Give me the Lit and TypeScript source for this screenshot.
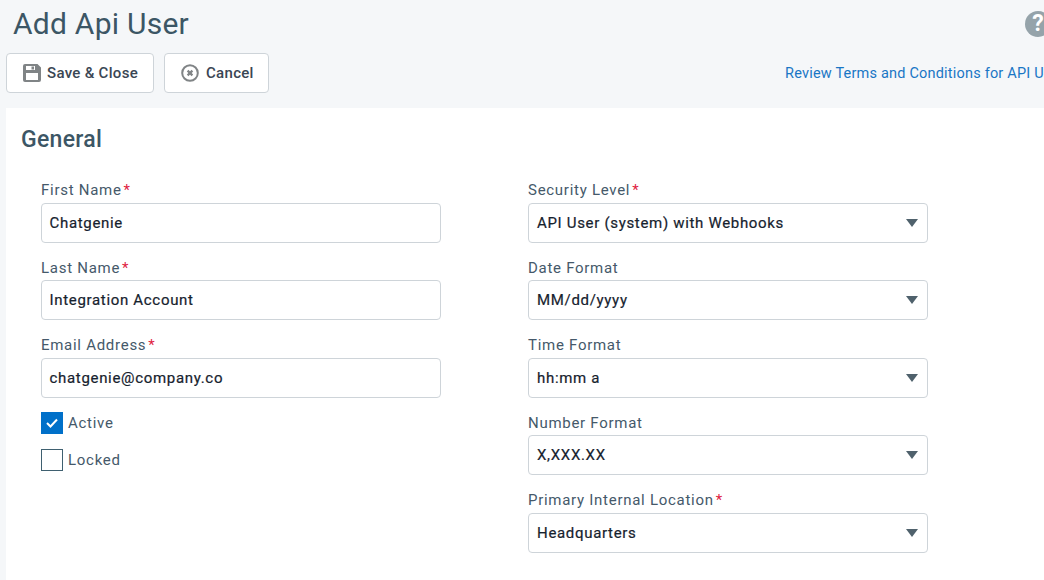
import { LitElement, html, css, svg } from "lit";
import { customElement } from "lit/decorators.js";

type Field = { label: string; value: string; req?: boolean };

const left: Field[] = [
  { label: "First Name", value: "Chatgenie", req: true },
  { label: "Last Name", value: "Integration Account", req: true },
  { label: "Email Address", value: "chatgenie@company.co", req: true },
];
const right: Field[] = [
  { label: "Security Level", value: "API User (system) with Webhooks", req: true },
  { label: "Date Format", value: "MM/dd/yyyy" },
  { label: "Time Format", value: "hh:mm a" },
  { label: "Number Format", value: "X,XXX.XX" },
  { label: "Primary Internal Location", value: "Headquarters", req: true },
];

@customElement("app-root")
export class AppRoot extends LitElement {
  static styles = css`
    :host {
      display: block;
      width: 1044px;
      height: 580px;
      overflow: hidden;
      background: #f5f7f9;
      font-family: Roboto, "Liberation Sans", sans-serif;
      color: #3b5260;
    }
    .head {
      display: flex;
      justify-content: space-between;
      height: 53px;
      padding-left: 13px;
      overflow: hidden;
    }
    h1 {
      margin: 6px 0 0;
      font-size: 30px;
      line-height: 36px;
      font-weight: 400;
      color: #3c5665;
      letter-spacing: 0.25px;
    }
    .help {
      width: 26px;
      height: 26px;
      margin: 11px -7px 0 0;
      flex: none;
      border-radius: 50%;
      background: #95a3aa;
      color: #fff;
      font-size: 23px;
      font-weight: 700;
      line-height: 26px;
      text-align: center;
    }
    .bar {
      display: flex;
      align-items: center;
      height: 40px;
      padding-left: 6px;
      gap: 10px;
      white-space: nowrap;
    }
    .btn {
      display: flex;
      align-items: center;
      box-sizing: border-box;
      height: 40px;
      background: #fff;
      border: 1px solid #ced4d9;
      border-radius: 4px;
      font-size: 15px;
      font-weight: 500;
      color: #3a4654;
      letter-spacing: 0.3px;
    }
    .save { width: 148px; padding-left: 16px; gap: 6px; }
    .cancel { width: 105px; padding-left: 16px; gap: 7px; }
    .link {
      margin-left: auto;
      width: 259px;
      overflow: hidden;
      color: #1976c5;
      font-size: 14.5px;
      letter-spacing: 0.2px;
    }
    .panel {
      margin: 15px 0 0 6px;
      height: 472px;
      background: #fff;
      padding: 18px 0 0 15px;
      box-sizing: border-box;
    }
    h2 {
      margin: 0;
      font-size: 23px;
      line-height: 27px;
      font-weight: 500;
      letter-spacing: 0.3px;
      color: #3c5665;
    }
    .cols {
      display: flex;
      gap: 87px;
      margin: 0 0 0 20px;
      padding-top: 28.5px;
    }
    .col { width: 400px; display: flex; flex-direction: column; }
    .field { height: 77.5px; }
    .label {
      height: 21px;
      margin-top: -0.5px;
      margin-bottom: 0.5px;
      font-size: 15px;
      line-height: 18px;
      letter-spacing: 0.72px;
      font-weight: 400;
      color: #45596a;
      white-space: nowrap;
    }
    .req { color: #e0223f; margin-left: 2px; }
    .box {
      display: flex;
      align-items: center;
      justify-content: space-between;
      box-sizing: border-box;
      height: 40px;
      border: 1px solid #ced4d9;
      border-radius: 4px;
      padding: 0 9px 0 8px;
      font-size: 15px;
      font-weight: 400;
      letter-spacing: 0.68px;
      color: #16222e;
      -webkit-text-stroke: 0.2px #16222e;
    }
    .text-box { padding-left: 7.5px; }
    .arrow {
      width: 0;
      height: 0;
      border-left: 6px solid transparent;
      border-right: 6px solid transparent;
      border-top: 8px solid #4f616c;
    }
    .checks { display: flex; flex-direction: column; gap: 15px; margin-top: -2px; }
    .check { display: flex; align-items: center; gap: 5px; height: 22px; font-size: 15px; letter-spacing: 0.72px; color: #45596a; }
    .tick {
      box-sizing: border-box;
      width: 22px;
      height: 22px;
      display: flex;
      align-items: center;
      justify-content: center;
      border: 1px solid #3f6070;
      background: #fff;
    }
    .tick.on { background: #0070c9; border-color: #0070c9; }
  `;

  private field(f: Field, select: boolean) {
    return html`<div class="field">
      <div class="label">${f.label}${f.req ? html`<span class="req">*</span>` : ""}</div>
      <div class="box ${select ? "" : "text-box"}"><span>${f.value}</span>${select ? html`<span class="arrow"></span>` : ""}</div>
    </div>`;
  }

  render() {
    const disk = svg`<path fill="#808486" fill-rule="evenodd" d="M2 0h12.5L18 3.5V16a2 2 0 0 1-2 2H2a2 2 0 0 1-2-2V2a2 2 0 0 1 2-2zM3 2v4h9V2zM3 9v7h12V9z"/><rect x="8.5" y="2.5" width="2.5" height="3" fill="#808486"/>`;
    return html`
      <div class="head">
        <h1>Add Api User</h1>
        <div class="help">?</div>
      </div>
      <div class="bar">
        <div class="btn save">
          <svg width="18" height="18" viewBox="0 0 18 18">${disk}</svg>
          <span>Save &amp; Close</span>
        </div>
        <div class="btn cancel">
          <svg width="18" height="18" viewBox="0 0 18 18" fill="none" stroke="#808486">
            <circle cx="9" cy="9" r="7.8" stroke-width="2"/>
            <path d="M6.6 6.6l4.8 4.8M11.4 6.6l-4.8 4.8" stroke-width="2.2"/>
          </svg>
          <span>Cancel</span>
        </div>
        <div class="link">Review Terms and Conditions for API Users</div>
      </div>
      <div class="panel">
        <h2>General</h2>
        <div class="cols">
          <div class="col">
            ${left.map((f) => this.field(f, false))}
            <div class="checks">
              <div class="check">
                <span class="tick on">
                  <svg width="12" height="10" viewBox="0 0 12 10" fill="none" stroke="#fff" stroke-width="2"><path d="M1 5l3.5 3.5L11 1.5"/></svg>
                </span>Active
              </div>
              <div class="check"><span class="tick"></span>Locked</div>
            </div>
          </div>
          <div class="col">${right.map((f) => this.field(f, true))}</div>
        </div>
      </div>
    `;
  }
}
